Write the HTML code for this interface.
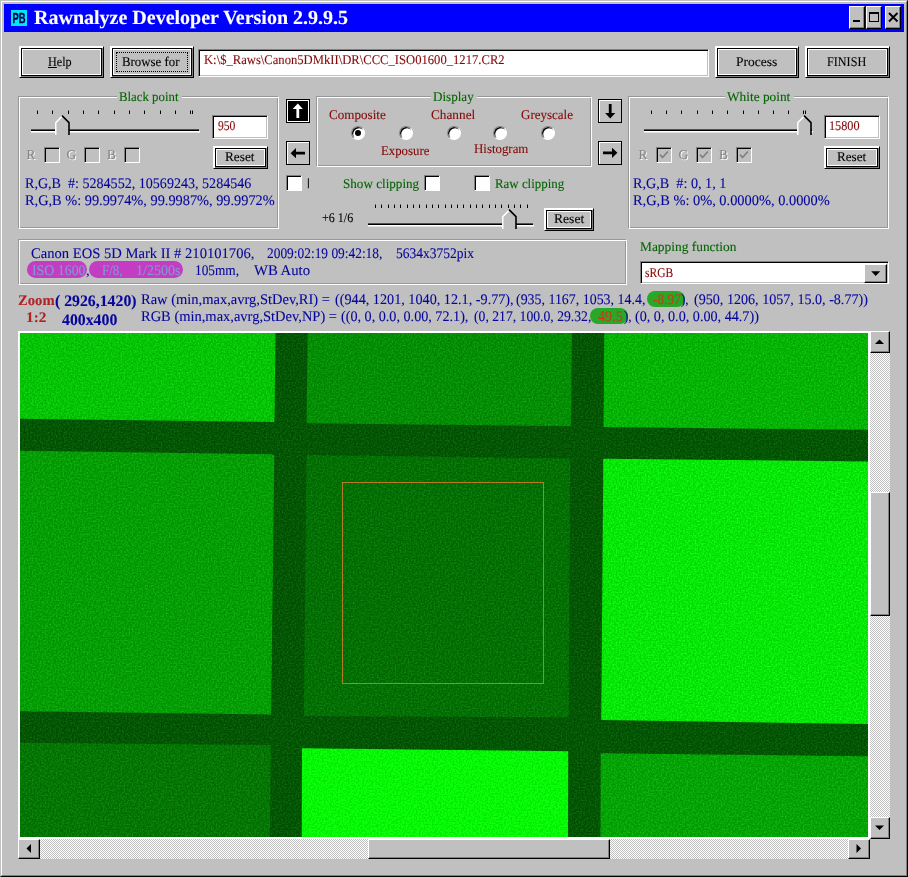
<!DOCTYPE html>
<html>
<head>
<meta charset="utf-8">
<title>Rawnalyze Developer Version 2.9.9.5</title>
<style>
html,body{margin:0;padding:0;background:#c0c0c0;}
body{width:908px;height:877px;overflow:hidden;position:relative;font-family:"Liberation Serif",serif;font-size:14.67px;color:#000;}
#win{position:absolute;left:0;top:0;width:908px;height:877px;overflow:hidden;will-change:transform;}
#win div,#win span,#win svg{position:absolute;box-sizing:border-box;}
.t{white-space:pre;transform-origin:0 0;text-rendering:geometricPrecision;-webkit-text-stroke:0.1px;}
#f1{left:0;top:0;width:908px;height:877px;border:1px solid;border-color:#c0c0c0 #000 #000 #c0c0c0;}
#f2{left:1px;top:1px;width:906px;height:875px;border:1px solid;border-color:#fff #808080 #808080 #fff;}
#title{left:4px;top:4px;width:900px;height:28px;background:#0000ff;}
#ttext{left:29.5px;top:0.5px;letter-spacing:0.06px;height:28px;line-height:27px;font-weight:bold;font-size:20px;color:#fff;white-space:pre;}
.cap{top:2px;width:16px;height:23px;background:#c0c0c0;border:1px solid;border-color:#fff #000 #000 #fff;box-shadow:inset -1px -1px 0 #808080;}
.btn{border:1px solid;border-color:#fff #000 #000 #fff;box-shadow:inset 1px 1px 0 #fff,inset -1px -1px 0 #808080;}
.btn>.in{left:1px;top:1px;right:1px;bottom:1px;border:1px solid #000;}
.btn>.in>.in2{left:0;top:0;right:0;bottom:0;border:1px solid #fff;}
.foc{left:2px;top:2px;right:2px;bottom:2px;border:1px dotted #000;}
.grp{border:1px solid;border-color:#989898 #fff #fff #989898;box-shadow:inset 1px 1px 0 #fff,inset -1px -1px 0 #989898;}
.sunk{background:#fff;border:1px solid;border-color:#808080 #fff #fff #808080;box-shadow:inset 1px 1px 0 #000,inset -1px -1px 0 #c0c0c0;}
.chk{background:#fff;border:1px solid;border-color:#808080 #fff #fff #808080;box-shadow:inset 1px 1px 0 #000;}
.chkd{background:#c0c0c0;border:1px solid;border-color:#808080 #fff #fff #808080;box-shadow:inset 1px 1px 0 #000;}
.arrow{width:24px;height:24px;border:1px solid #000;background:#c0c0c0;box-shadow:inset 1px 1px 0 #fff;}
.arrow.inv{background:#000;box-shadow:inset 0 0 0 1px #fff;border-color:#000}
.radio{width:14px;height:14px;border-radius:50%;background:#fff;border:1px solid;border-color:#808080 #fff #fff #808080;box-shadow:inset 1.2px 1.2px 0 #000;}
.dot{left:3px;top:3px;width:6px;height:6px;margin:0;border-radius:50%;background:#000}
.tick{width:1px;background:#000;}
.track{background:#000;border-bottom:1px solid #fff;border-top:0.5px solid #c0c0c0}
.sb{background:#c0c0c0;border:1px solid;border-color:#fff #000 #000 #fff;box-shadow:inset -1px -1px 0 #808080;}
.sbtrack{background-color:#fff;background-image:conic-gradient(#c0c0c0 25%,#fff 0 50%,#c0c0c0 0 75%,#fff 0);background-size:2px 2px;}
.hl{background:#c43cc4;border-radius:9px;}
.hlg{background:#28a828;border-radius:9px;}
</style>
</head>
<body>
<div id="win">
<div id="f1"></div><div id="f2"></div>
<div id="title">
<svg style="left:7px;top:6px" width="16" height="16" viewBox="0 0 16 16"><rect width="16" height="16" fill="#00e8f8"/><text x="1.5" y="13" font-family="Liberation Sans, sans-serif" font-weight="bold" font-size="15" fill="#000050" stroke="#000050" stroke-width="0.4" textLength="13" lengthAdjust="spacingAndGlyphs">PB</text></svg>
<div class="cap" style="left:845px"><svg width="15" height="21" style="left:0;top:0"><rect x="3" y="13" width="7" height="2" fill="#000"/></svg></div>
<div class="cap" style="left:862px"><svg width="15" height="21" style="left:-0.5px;top:0"><rect x="2.5" y="5.5" width="9" height="9" fill="none" stroke="#000"/><rect x="2" y="5" width="10" height="2" fill="#000"/></svg></div>
<div class="cap" style="left:881px"><svg width="15" height="21" style="left:0;top:0"><path d="M3 6 L11.5 14.5 M11.5 6 L3 14.5" stroke="#000" stroke-width="1.9"/></svg></div>
</div>
<span class="t" style="left:34.00px;top:7px;font-size:20px;line-height:23px;height:23px;color:#fff;font-weight:bold;">Rawnalyze Developer Version 2.9.9.5</span>
<div class="btn" style="left:19px;top:46px;width:85px;height:32px;"><div class="in"><div class="in2"></div></div></div>
<span class="t" style="left:48.00px;top:54px;font-size:13.33px;line-height:15px;height:15px;color:#000;transform:scaleX(0.9145);"><u>H</u>elp</span>
<div class="btn" style="left:110px;top:46px;width:84px;height:32px;"><div class="in"><div class="in2"><div class="foc"></div></div></div></div>
<span class="t" style="left:122.00px;top:54px;font-size:13.33px;line-height:15px;height:15px;color:#000;transform:scaleX(0.9642);">Browse for</span>
<div class="sunk" style="left:198px;top:49px;width:511px;height:28px;"></div>
<span class="t" style="left:204.00px;top:52px;font-size:13.33px;line-height:15px;height:15px;color:#840808;transform:scaleX(0.9474);">K:\$_Raws\Canon5DMkII\DR\CCC_ISO01600_1217.CR2</span>
<div class="btn" style="left:715px;top:46px;width:84px;height:32px;"><div class="in"><div class="in2"></div></div></div>
<span class="t" style="left:736.00px;top:54px;font-size:13.33px;line-height:15px;height:15px;color:#000;transform:scaleX(1.0115);">Process</span>
<div class="btn" style="left:805px;top:46px;width:85px;height:32px;"><div class="in"><div class="in2"></div></div></div>
<span class="t" style="left:827.00px;top:54px;font-size:13.33px;line-height:15px;height:15px;color:#000;transform:scaleX(0.9117);">FINISH</span>
<div class="grp" style="left:18px;top:96px;width:261px;height:133px;"></div>
<div class="" style="left:117px;top:90px;width:65px;height:14px;background:#c0c0c0"></div>
<span class="t" style="left:119.25px;top:89px;font-size:13.33px;line-height:15px;height:15px;color:#046404;transform:scaleX(0.9619);">Black point</span>
<div class="tick" style="left:37px;top:111px;height:3px"></div><div class="tick" style="left:37px;top:110px;height:1px;opacity:.45"></div>
<div class="tick" style="left:52px;top:111px;height:3px"></div><div class="tick" style="left:52px;top:110px;height:1px;opacity:.45"></div>
<div class="tick" style="left:68px;top:111px;height:3px"></div><div class="tick" style="left:68px;top:110px;height:1px;opacity:.45"></div>
<div class="tick" style="left:83px;top:111px;height:3px"></div><div class="tick" style="left:83px;top:110px;height:1px;opacity:.45"></div>
<div class="tick" style="left:98px;top:111px;height:3px"></div><div class="tick" style="left:98px;top:110px;height:1px;opacity:.45"></div>
<div class="tick" style="left:114px;top:111px;height:3px"></div><div class="tick" style="left:114px;top:110px;height:1px;opacity:.45"></div>
<div class="tick" style="left:129px;top:111px;height:3px"></div><div class="tick" style="left:129px;top:110px;height:1px;opacity:.45"></div>
<div class="tick" style="left:144px;top:111px;height:3px"></div><div class="tick" style="left:144px;top:110px;height:1px;opacity:.45"></div>
<div class="tick" style="left:160px;top:111px;height:3px"></div><div class="tick" style="left:160px;top:110px;height:1px;opacity:.45"></div>
<div class="tick" style="left:175px;top:111px;height:3px"></div><div class="tick" style="left:175px;top:110px;height:1px;opacity:.45"></div>
<div class="tick" style="left:190px;top:111px;height:3px"></div><div class="tick" style="left:190px;top:110px;height:1px;opacity:.45"></div>
<div class="tick" style="left:192px;top:111px;height:3px"></div><div class="tick" style="left:192px;top:110px;height:1px;opacity:.45"></div>
<div style="left:31px;top:129px;width:168px;height:2px;background:linear-gradient(#505050 50%,#000 50%)"></div><div style="left:31px;top:131px;width:169px;height:2px;background:linear-gradient(#fff 50%,#e4e4e4 50%)"></div>
<svg style="left:54px;top:114px" width="17" height="23"><path d="M1 21 V8.5 L8 1.5 L15 8.5 V21 Z" fill="#c0c0c0"/><path d="M1.75 21 V8.7 L8 2.4" stroke="#fff" stroke-width="1.5" fill="none"/><path d="M8 1.6 L15 8.6 V21" stroke="#000" stroke-width="1.6" fill="none"/></svg>
<div class="sunk" style="left:212px;top:115px;width:56px;height:24px;"></div>
<span class="t" style="left:217.60px;top:118px;font-size:13.33px;line-height:15px;height:15px;color:#840808;transform:scaleX(0.8707);">950</span>
<span class="t" style="left:26.40px;top:147px;font-size:13.33px;line-height:15px;height:15px;color:#848484;text-shadow:1px 1px 0 #fff;">R</span>
<div class="chkd" style="left:44px;top:147px;width:16px;height:16px;"></div>
<span class="t" style="left:66.50px;top:147px;font-size:13.33px;line-height:15px;height:15px;color:#848484;text-shadow:1px 1px 0 #fff;">G</span>
<div class="chkd" style="left:84px;top:147px;width:16px;height:16px;"></div>
<span class="t" style="left:107.00px;top:147px;font-size:13.33px;line-height:15px;height:15px;color:#848484;text-shadow:1px 1px 0 #fff;">B</span>
<div class="chkd" style="left:124px;top:147px;width:16px;height:16px;"></div>
<div class="btn" style="left:213px;top:146px;width:55px;height:23px;"><div class="in"><div class="in2"></div></div></div>
<span class="t" style="left:225.20px;top:149px;font-size:13.33px;line-height:15px;height:15px;color:#000;transform:scaleX(0.9964);">Reset</span>
<span class="t" style="left:25.00px;top:176px;font-size:14.67px;line-height:17px;height:17px;color:#06069c;transform:scaleX(0.9601);">R,G,B  #: 5284552, 10569243, 5284546</span>
<span class="t" style="left:25.00px;top:193px;font-size:14.67px;line-height:17px;height:17px;color:#06069c;transform:scaleX(0.9783);">R,G,B %: 99.9974%, 99.9987%, 99.9972%</span>
<div class="arrow inv" style="left:286px;top:99px"><svg width="24" height="24" style="left:-1px;top:-1px"><g transform="rotate(0 12 12)"><path d="M11.8 4.6 L16.9 10 H13.2 V19 H10.4 V10 H6.7 Z" fill="#fff"/></g></svg></div>
<div class="arrow" style="left:286px;top:141px"><svg width="24" height="24" style="left:-1px;top:-1px"><g transform="rotate(270 12 12)"><path d="M11.8 4.6 L16.9 10 H13.2 V19 H10.4 V10 H6.7 Z" fill="#000"/></g></svg></div>
<div class="arrow" style="left:598px;top:99px"><svg width="24" height="24" style="left:-1px;top:-1px"><g transform="rotate(180 12 12)"><path d="M11.8 4.6 L16.9 10 H13.2 V19 H10.4 V10 H6.7 Z" fill="#000"/></g></svg></div>
<div class="arrow" style="left:598px;top:141px"><svg width="24" height="24" style="left:-1px;top:-1px"><g transform="rotate(90 12 12)"><path d="M11.8 4.6 L16.9 10 H13.2 V19 H10.4 V10 H6.7 Z" fill="#000"/></g></svg></div>
<div class="grp" style="left:316px;top:96px;width:276px;height:71px;"></div>
<div class="" style="left:431px;top:90px;width:46px;height:14px;background:#c0c0c0"></div>
<span class="t" style="left:433.00px;top:89px;font-size:13.33px;line-height:15px;height:15px;color:#046404;transform:scaleX(0.9809);">Display</span>
<span class="t" style="left:328.60px;top:107px;font-size:13.33px;line-height:15px;height:15px;color:#840808;transform:scaleX(0.9820);">Composite</span>
<span class="t" style="left:430.50px;top:107px;font-size:13.33px;line-height:15px;height:15px;color:#840808;transform:scaleX(0.9952);">Channel</span>
<span class="t" style="left:520.50px;top:107px;font-size:13.33px;line-height:15px;height:15px;color:#840808;transform:scaleX(0.9744);">Greyscale</span>
<span class="t" style="left:381.00px;top:143px;font-size:13.33px;line-height:15px;height:15px;color:#840808;transform:scaleX(0.9599);">Exposure</span>
<span class="t" style="left:474.00px;top:141px;font-size:13.33px;line-height:15px;height:15px;color:#840808;transform:scaleX(0.9666);">Histogram</span>
<div class="radio" style="left:351px;top:126px"><div class="dot"></div></div>
<div class="radio" style="left:399px;top:126px"></div>
<div class="radio" style="left:447px;top:126px"></div>
<div class="radio" style="left:493px;top:126px"></div>
<div class="radio" style="left:541px;top:126px"></div>
<div class="chk" style="left:286px;top:175px;width:16px;height:16px;"></div>
<span class="t" style="left:307.1px;top:176.6px;font-family:'Liberation Sans',sans-serif;font-size:10.7px;line-height:12px;height:12px;color:#000">|</span>
<span class="t" style="left:342.50px;top:176px;font-size:13.33px;line-height:15px;height:15px;color:#046404;transform:scaleX(0.9844);">Show clipping</span>
<div class="chk" style="left:424px;top:175px;width:16px;height:16px;"></div>
<div class="chk" style="left:474px;top:175px;width:16px;height:16px;"></div>
<span class="t" style="left:495.00px;top:176px;font-size:13.33px;line-height:15px;height:15px;color:#046404;transform:scaleX(0.9682);">Raw clipping</span>
<span class="t" style="left:322.00px;top:210px;font-size:13.33px;line-height:15px;height:15px;color:#000;transform:scaleX(0.9031);">+6 1/6</span>
<div class="tick" style="left:375px;top:205px;height:3px"></div><div class="tick" style="left:375px;top:204px;height:1px;opacity:.45"></div>
<div class="tick" style="left:381px;top:205px;height:3px"></div><div class="tick" style="left:381px;top:204px;height:1px;opacity:.45"></div>
<div class="tick" style="left:388px;top:205px;height:3px"></div><div class="tick" style="left:388px;top:204px;height:1px;opacity:.45"></div>
<div class="tick" style="left:394px;top:205px;height:3px"></div><div class="tick" style="left:394px;top:204px;height:1px;opacity:.45"></div>
<div class="tick" style="left:400px;top:205px;height:3px"></div><div class="tick" style="left:400px;top:204px;height:1px;opacity:.45"></div>
<div class="tick" style="left:407px;top:205px;height:3px"></div><div class="tick" style="left:407px;top:204px;height:1px;opacity:.45"></div>
<div class="tick" style="left:413px;top:205px;height:3px"></div><div class="tick" style="left:413px;top:204px;height:1px;opacity:.45"></div>
<div class="tick" style="left:419px;top:205px;height:3px"></div><div class="tick" style="left:419px;top:204px;height:1px;opacity:.45"></div>
<div class="tick" style="left:426px;top:205px;height:3px"></div><div class="tick" style="left:426px;top:204px;height:1px;opacity:.45"></div>
<div class="tick" style="left:432px;top:205px;height:3px"></div><div class="tick" style="left:432px;top:204px;height:1px;opacity:.45"></div>
<div class="tick" style="left:438px;top:205px;height:3px"></div><div class="tick" style="left:438px;top:204px;height:1px;opacity:.45"></div>
<div class="tick" style="left:445px;top:205px;height:3px"></div><div class="tick" style="left:445px;top:204px;height:1px;opacity:.45"></div>
<div class="tick" style="left:451px;top:205px;height:3px"></div><div class="tick" style="left:451px;top:204px;height:1px;opacity:.45"></div>
<div class="tick" style="left:457px;top:205px;height:3px"></div><div class="tick" style="left:457px;top:204px;height:1px;opacity:.45"></div>
<div class="tick" style="left:463px;top:205px;height:3px"></div><div class="tick" style="left:463px;top:204px;height:1px;opacity:.45"></div>
<div class="tick" style="left:470px;top:205px;height:3px"></div><div class="tick" style="left:470px;top:204px;height:1px;opacity:.45"></div>
<div class="tick" style="left:476px;top:205px;height:3px"></div><div class="tick" style="left:476px;top:204px;height:1px;opacity:.45"></div>
<div class="tick" style="left:482px;top:205px;height:3px"></div><div class="tick" style="left:482px;top:204px;height:1px;opacity:.45"></div>
<div class="tick" style="left:489px;top:205px;height:3px"></div><div class="tick" style="left:489px;top:204px;height:1px;opacity:.45"></div>
<div class="tick" style="left:495px;top:205px;height:3px"></div><div class="tick" style="left:495px;top:204px;height:1px;opacity:.45"></div>
<div class="tick" style="left:501px;top:205px;height:3px"></div><div class="tick" style="left:501px;top:204px;height:1px;opacity:.45"></div>
<div class="tick" style="left:508px;top:205px;height:3px"></div><div class="tick" style="left:508px;top:204px;height:1px;opacity:.45"></div>
<div class="tick" style="left:514px;top:205px;height:3px"></div><div class="tick" style="left:514px;top:204px;height:1px;opacity:.45"></div>
<div class="tick" style="left:520px;top:205px;height:3px"></div><div class="tick" style="left:520px;top:204px;height:1px;opacity:.45"></div>
<div class="tick" style="left:527px;top:205px;height:3px"></div><div class="tick" style="left:527px;top:204px;height:1px;opacity:.45"></div>
<div style="left:368px;top:223px;width:165px;height:2px;background:linear-gradient(#505050 50%,#000 50%)"></div><div style="left:368px;top:225px;width:166px;height:2px;background:linear-gradient(#fff 50%,#e4e4e4 50%)"></div>
<svg style="left:501px;top:208px" width="17" height="23"><path d="M1 21 V8.5 L8 1.5 L15 8.5 V21 Z" fill="#c0c0c0"/><path d="M1.75 21 V8.7 L8 2.4" stroke="#fff" stroke-width="1.5" fill="none"/><path d="M8 1.6 L15 8.6 V21" stroke="#000" stroke-width="1.6" fill="none"/></svg>
<div class="btn" style="left:544px;top:208px;width:50px;height:23px;"><div class="in"><div class="in2"></div></div></div>
<span class="t" style="left:554.00px;top:211px;font-size:13.33px;line-height:15px;height:15px;color:#000;transform:scaleX(1.0198);">Reset</span>
<div class="grp" style="left:628px;top:96px;width:261px;height:133px;"></div>
<div class="" style="left:725px;top:90px;width:69px;height:14px;background:#c0c0c0"></div>
<span class="t" style="left:727.00px;top:89px;font-size:13.33px;line-height:15px;height:15px;color:#046404;">White point</span>
<div class="tick" style="left:651px;top:111px;height:3px"></div><div class="tick" style="left:651px;top:110px;height:1px;opacity:.45"></div>
<div class="tick" style="left:666px;top:111px;height:3px"></div><div class="tick" style="left:666px;top:110px;height:1px;opacity:.45"></div>
<div class="tick" style="left:681px;top:111px;height:3px"></div><div class="tick" style="left:681px;top:110px;height:1px;opacity:.45"></div>
<div class="tick" style="left:697px;top:111px;height:3px"></div><div class="tick" style="left:697px;top:110px;height:1px;opacity:.45"></div>
<div class="tick" style="left:712px;top:111px;height:3px"></div><div class="tick" style="left:712px;top:110px;height:1px;opacity:.45"></div>
<div class="tick" style="left:727px;top:111px;height:3px"></div><div class="tick" style="left:727px;top:110px;height:1px;opacity:.45"></div>
<div class="tick" style="left:743px;top:111px;height:3px"></div><div class="tick" style="left:743px;top:110px;height:1px;opacity:.45"></div>
<div class="tick" style="left:758px;top:111px;height:3px"></div><div class="tick" style="left:758px;top:110px;height:1px;opacity:.45"></div>
<div class="tick" style="left:773px;top:111px;height:3px"></div><div class="tick" style="left:773px;top:110px;height:1px;opacity:.45"></div>
<div class="tick" style="left:788px;top:111px;height:3px"></div><div class="tick" style="left:788px;top:110px;height:1px;opacity:.45"></div>
<div class="tick" style="left:803px;top:111px;height:3px"></div><div class="tick" style="left:803px;top:110px;height:1px;opacity:.45"></div>
<div class="tick" style="left:805px;top:111px;height:3px"></div><div class="tick" style="left:805px;top:110px;height:1px;opacity:.45"></div>
<div style="left:644px;top:129px;width:168px;height:2px;background:linear-gradient(#505050 50%,#000 50%)"></div><div style="left:644px;top:131px;width:169px;height:2px;background:linear-gradient(#fff 50%,#e4e4e4 50%)"></div>
<svg style="left:796px;top:114px" width="17" height="23"><path d="M1 21 V8.5 L8 1.5 L15 8.5 V21 Z" fill="#c0c0c0"/><path d="M1.75 21 V8.7 L8 2.4" stroke="#fff" stroke-width="1.5" fill="none"/><path d="M8 1.6 L15 8.6 V21" stroke="#000" stroke-width="1.6" fill="none"/></svg>
<div class="sunk" style="left:824px;top:115px;width:56px;height:24px;"></div>
<span class="t" style="left:829.08px;top:118px;font-size:13.33px;line-height:15px;height:15px;color:#840808;transform:scaleX(0.9187);">15800</span>
<span class="t" style="left:638.40px;top:147px;font-size:13.33px;line-height:15px;height:15px;color:#848484;text-shadow:1px 1px 0 #fff;">R</span>
<div class="chkd" style="left:656px;top:147px;width:16px;height:16px;"><svg width="14" height="14" style="left:0;top:0"><path d="M3 6.5 L5.5 9.5 L11 3.5" stroke="#808080" stroke-width="1.8" fill="none"/></svg></div>
<span class="t" style="left:678.50px;top:147px;font-size:13.33px;line-height:15px;height:15px;color:#848484;text-shadow:1px 1px 0 #fff;">G</span>
<div class="chkd" style="left:696px;top:147px;width:16px;height:16px;"><svg width="14" height="14" style="left:0;top:0"><path d="M3 6.5 L5.5 9.5 L11 3.5" stroke="#808080" stroke-width="1.8" fill="none"/></svg></div>
<span class="t" style="left:719.00px;top:147px;font-size:13.33px;line-height:15px;height:15px;color:#848484;text-shadow:1px 1px 0 #fff;">B</span>
<div class="chkd" style="left:736px;top:147px;width:16px;height:16px;"><svg width="14" height="14" style="left:0;top:0"><path d="M3 6.5 L5.5 9.5 L11 3.5" stroke="#808080" stroke-width="1.8" fill="none"/></svg></div>
<div class="btn" style="left:824px;top:146px;width:56px;height:23px;"><div class="in"><div class="in2"></div></div></div>
<span class="t" style="left:837.00px;top:149px;font-size:13.33px;line-height:15px;height:15px;color:#000;transform:scaleX(0.9864);">Reset</span>
<span class="t" style="left:632.50px;top:176px;font-size:14.67px;line-height:17px;height:17px;color:#06069c;transform:scaleX(0.9671);">R,G,B  #: 0, 1, 1</span>
<span class="t" style="left:632.50px;top:193px;font-size:14.67px;line-height:17px;height:17px;color:#06069c;transform:scaleX(0.9821);">R,G,B %: 0%, 0.0000%, 0.0000%</span>
<div class="grp" style="left:18px;top:239px;width:609px;height:46px;"></div>
<span class="t" style="left:31.00px;top:246px;font-size:14.67px;line-height:17px;height:17px;color:#06069c;transform:scaleX(0.9960);">Canon EOS 5D Mark II # 210101706,</span>
<span class="t" style="left:267.00px;top:246px;font-size:14.67px;line-height:17px;height:17px;color:#06069c;transform:scaleX(0.9140);">2009:02:19 09:42:18,</span>
<span class="t" style="left:396.25px;top:246px;font-size:14.67px;line-height:17px;height:17px;color:#06069c;transform:scaleX(0.9226);">5634x3752pix</span>
<div class="hl" style="left:27px;top:261px;width:60px;height:17px;"></div>
<div class="hl" style="left:89px;top:261px;width:94px;height:17px;"></div>
<span class="t" style="left:31.50px;top:263px;font-size:14.67px;line-height:17px;height:17px;color:#7c9cd0;transform:scaleX(0.9464);">ISO 1600</span>
<span class="t" style="left:86.00px;top:263px;font-size:14.67px;line-height:17px;height:17px;color:#06069c;">,</span>
<span class="t" style="left:102.25px;top:263px;font-size:14.67px;line-height:17px;height:17px;color:#7c9cd0;transform:scaleX(0.8869);">F/8,</span>
<span class="t" style="left:136.29px;top:263px;font-size:14.67px;line-height:17px;height:17px;color:#7c9cd0;transform:scaleX(0.9571);">1/2500s</span>
<span class="t" style="left:195.09px;top:263px;font-size:14.67px;line-height:17px;height:17px;color:#06069c;transform:scaleX(0.9084);">105mm,</span>
<span class="t" style="left:253.75px;top:263px;font-size:14.67px;line-height:17px;height:17px;color:#06069c;transform:scaleX(1.0054);">WB Auto</span>
<span class="t" style="left:640.00px;top:239px;font-size:13.33px;line-height:15px;height:15px;color:#046404;transform:scaleX(1.0051);">Mapping function</span>
<div class="sunk" style="left:640px;top:261px;width:249px;height:23px;"><div class="sb" style="right:1px;top:2px;width:23px;height:19px"><svg width="21" height="17" style="left:0;top:0"><path d="M6.2 6.3 H15.2 L10.7 11 Z" fill="#000"/></svg></div></div>
<span class="t" style="left:644.70px;top:265px;font-size:13.33px;line-height:15px;height:15px;color:#840808;transform:scaleX(0.8654);">sRGB</span>
<span class="t" style="left:18.00px;top:293px;font-size:14.67px;line-height:17px;height:17px;color:#b02424;font-weight:bold;">Zoom</span>
<span class="t" style="left:25.76px;top:310px;font-size:14.67px;line-height:17px;height:17px;color:#b02424;transform:scaleX(1.0435);font-weight:bold;">1:2</span>
<span class="t" style="left:54.80px;top:293px;font-size:16px;line-height:18px;height:18px;color:#06069c;transform:scaleX(0.9863);font-weight:bold;">( 2926,1420)</span>
<span class="t" style="left:61.70px;top:312px;font-size:16px;line-height:18px;height:18px;color:#06069c;transform:scaleX(0.9875);font-weight:bold;">400x400</span>
<div class="hlg" style="left:647px;top:291px;width:38px;height:16px;"></div>
<div class="hlg" style="left:590px;top:308px;width:38px;height:16px;"></div>
<span class="t" style="left:141.25px;top:292px;font-size:14.67px;line-height:17px;height:17px;color:#06069c;transform:scaleX(0.9894);">Raw (min,max,avrg,StDev,RI) =</span>
<span class="t" style="left:334.50px;top:292px;font-size:14.67px;line-height:17px;height:17px;color:#06069c;transform:scaleX(0.9688);">((944, 1201, 1040, 12.1, -9.77),</span>
<span class="t" style="left:516.25px;top:292px;font-size:14.67px;line-height:17px;height:17px;color:#06069c;transform:scaleX(0.9496);">(935, 1167, 1053, 14.4,</span>
<span class="t" style="left:652.50px;top:292px;font-size:14.67px;line-height:17px;height:17px;color:#c83c14;transform:scaleX(0.9106);">-8.97</span>
<span class="t" style="left:681.00px;top:292px;font-size:14.67px;line-height:17px;height:17px;color:#06069c;transform:scaleX(0.8883);">),</span>
<span class="t" style="left:693.50px;top:292px;font-size:14.67px;line-height:17px;height:17px;color:#06069c;transform:scaleX(0.9621);">(950, 1206, 1057, 15.0, -8.77))</span>
<span class="t" style="left:141.25px;top:309px;font-size:14.67px;line-height:17px;height:17px;color:#06069c;transform:scaleX(0.9881);">RGB (min,max,avrg,StDev,NP) =</span>
<span class="t" style="left:341.25px;top:309px;font-size:14.67px;line-height:17px;height:17px;color:#06069c;transform:scaleX(0.9659);">((0, 0, 0.0, 0.00, 72.1),</span>
<span class="t" style="left:473.75px;top:309px;font-size:14.67px;line-height:17px;height:17px;color:#06069c;transform:scaleX(0.9330);">(0, 217, 100.0, 29.32,</span>
<span class="t" style="left:598.00px;top:309px;font-size:14.67px;line-height:17px;height:17px;color:#c83c14;transform:scaleX(0.9676);">49.5</span>
<span class="t" style="left:624.00px;top:309px;font-size:14.67px;line-height:17px;height:17px;color:#06069c;transform:scaleX(0.8883);">),</span>
<span class="t" style="left:635.00px;top:309px;font-size:14.67px;line-height:17px;height:17px;color:#06069c;transform:scaleX(0.9661);">(0, 0, 0.0, 0.00, 44.7))</span>
<div class="" style="left:18px;top:331px;width:852px;height:508px;background:#fff"></div>
<svg id="img" style="left:20px;top:333px" width="848" height="504" viewBox="20 333 848 504">
<defs><filter id="nz" x="0" y="0" width="100%" height="100%" color-interpolation-filters="sRGB"><feTurbulence type="fractalNoise" baseFrequency="0.62" numOctaves="1" seed="7" result="n"/><feColorMatrix in="n" type="matrix" values="0 1 0 0 0  0 1 0 0 0  0 1 0 0 0  0 0 0 0 1" result="g"/><feComposite in="SourceGraphic" in2="g" operator="arithmetic" k1="0.14" k2="0.93" k3="0.22" k4="-0.11"/></filter></defs>
<g filter="url(#nz)"><rect x="20" y="333" width="848" height="504" fill="#035603"/><polygon points="20,333 275.5,333 274.5,422 20,418.8" fill="#06c406"/><polygon points="307.6,333 572,333 571,426.2 306.6,423.2" fill="#048e04"/><polygon points="604.25,333 868,333 868,429.8 603.5,427" fill="#05b405"/><polygon points="20,450.8 274.3,454.2 271.2,714.5 20,711.3" fill="#059e05"/><polygon points="306.6,455 570.3,458.5 568.7,717.5 303.8,716" fill="#037003"/><polygon points="603.3,458.75 868,461.5 868,724 601.25,720" fill="#07e807"/><polygon points="20,742.7 270.8,745 270,837 20,837" fill="#047604"/><polygon points="302,748.25 568.2,751.25 568,837 301.75,837" fill="#07f807"/><polygon points="600.7,753.25 868,756.3 868,837 600.5,837" fill="#05a405"/></g>
<rect x="342.5" y="482.5" width="201" height="201" fill="none" stroke="#c87c28" stroke-width="1" opacity="0.9"/>
</svg>
<div class="sbtrack" style="left:870px;top:331px;width:20px;height:508px;"></div>
<div class="sb" style="left:870px;top:331px;width:20px;height:22px;"><svg width="18" height="20" style="left:0;top:0"><path d="M4 12 H13 L8.5 7.5 Z" fill="#000"/></svg></div>
<div class="sb" style="left:870px;top:817px;width:20px;height:22px;"><svg width="18" height="20" style="left:0;top:0"><path d="M4 7.5 H13 L8.5 12 Z" fill="#000"/></svg></div>
<div class="sb" style="left:870px;top:492px;width:20px;height:124px;"></div>
<div class="sbtrack" style="left:18px;top:839px;width:852px;height:20px;"></div>
<div class="sb" style="left:18px;top:839px;width:22px;height:20px;"><svg width="20" height="18" style="left:0;top:0"><path d="M12 4 V13 L7.5 8.5 Z" fill="#000"/></svg></div>
<div class="sb" style="left:848px;top:839px;width:22px;height:20px;"><svg width="20" height="18" style="left:0;top:0"><path d="M7.5 4 V13 L12 8.5 Z" fill="#000"/></svg></div>
<div class="sb" style="left:368px;top:839px;width:242px;height:20px;"></div>
</div>
</body>
</html>
